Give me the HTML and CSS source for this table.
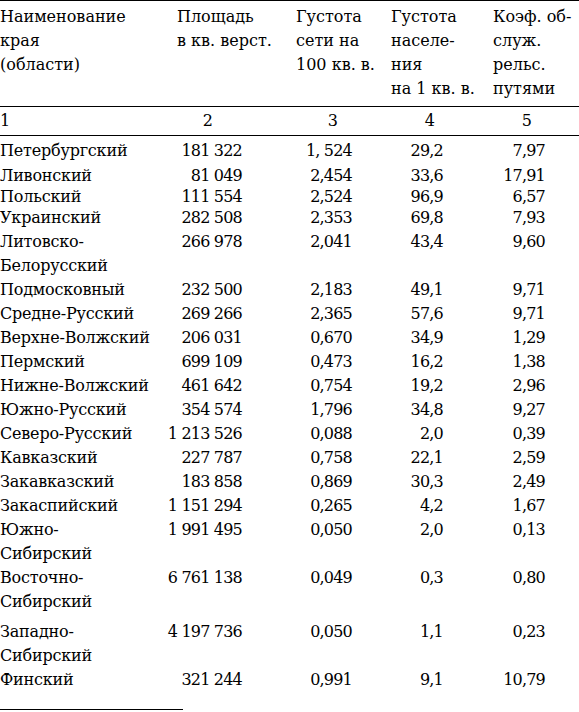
FILE: index.html
```html
<!DOCTYPE html>
<html lang="ru">
<head>
<meta charset="utf-8">
<link rel="stylesheet" href="styles.css">
</head>
<body>
<table class="tbl">
  <colgroup>
    <col class="c1"><col class="c2"><col class="c3"><col class="c4"><col class="c5">
  </colgroup>
  <thead>
    <tr class="head">
      <th>Наименование<br>края<br>(области)</th>
      <th class="h2">Площадь<br>в кв. верст.</th>
      <th>Густота<br>сети на<br>100 кв. в.</th>
      <th>Густота<br>населе-<br>ния<br>на 1 кв. в.</th>
      <th>Коэф. об-<br>служ.<br>рельс.<br>путями</th>
    </tr>
    <tr class="nums">
      <td class="n1">1</td><td class="n2">2</td><td class="n3">3</td><td class="n4">4</td><td class="n5">5</td>
    </tr>
  </thead>
  <tbody>
    <tr class="r first"><td>Петербургский</td><td>181 322</td><td>1, 524</td><td>29,2</td><td>7,97</td></tr>
    <tr class="r r25"><td>Ливонский</td><td>81 049</td><td>2,454</td><td>33,6</td><td>17,91</td></tr>
    <tr class="r r18"><td>Польский</td><td>111 554</td><td>2,524</td><td>96,9</td><td>6,57</td></tr>
    <tr class="r"><td>Украинский</td><td>282 508</td><td>2,353</td><td>69,8</td><td>7,93</td></tr>
    <tr class="r"><td>Литовско-<br>Белорусский</td><td>266 978</td><td>2,041</td><td>43,4</td><td>9,60</td></tr>
    <tr class="r"><td>Подмосковный</td><td>232 500</td><td>2,183</td><td>49,1</td><td>9,71</td></tr>
    <tr class="r"><td>Средне-Русский</td><td>269 266</td><td>2,365</td><td>57,6</td><td>9,71</td></tr>
    <tr class="r"><td>Верхне-Волжский</td><td>206 031</td><td>0,670</td><td>34,9</td><td>1,29</td></tr>
    <tr class="r"><td>Пермский</td><td>699 109</td><td>0,473</td><td>16,2</td><td>1,38</td></tr>
    <tr class="r"><td>Нижне-Волжский</td><td>461 642</td><td>0,754</td><td>19,2</td><td>2,96</td></tr>
    <tr class="r"><td>Южно-Русский</td><td>354 574</td><td>1,796</td><td>34,8</td><td>9,27</td></tr>
    <tr class="r"><td>Северо-Русский</td><td>1 213 526</td><td>0,088</td><td>2,0</td><td>0,39</td></tr>
    <tr class="r"><td>Кавказский</td><td>227 787</td><td>0,758</td><td>22,1</td><td>2,59</td></tr>
    <tr class="r"><td>Закавказский</td><td>183 858</td><td>0,869</td><td>30,3</td><td>2,49</td></tr>
    <tr class="r"><td>Закаспийский</td><td>1 151 294</td><td>0,265</td><td>4,2</td><td>1,67</td></tr>
    <tr class="r"><td>Южно-<br>Сибирский</td><td>1 991 495</td><td>0,050</td><td>2,0</td><td>0,13</td></tr>
    <tr class="r gap"><td>Восточно-<br>Сибирский</td><td>6 761 138</td><td>0,049</td><td>0,3</td><td>0,80</td></tr>
    <tr class="r"><td>Западно-<br>Сибирский</td><td>4 197 736</td><td>0,050</td><td>1,1</td><td>0,23</td></tr>
    <tr class="r"><td>Финский</td><td>321 244</td><td>0,991</td><td>9,1</td><td>10,79</td></tr>
  </tbody>
</table>
<div class="foot"></div>
</body>
</html>
```
FILE: styles.css
```css
html, body {
  margin: 0;
  padding: 0;
  background: #fff;
}
body {
  font-family: "DejaVu Serif", "Liberation Serif", serif;
  font-size: 16px;
  color: #000;
  width: 579px;
  height: 712px;
  overflow: hidden;
}
.tbl {
  width: 579px;
  border-collapse: collapse;
  table-layout: fixed;
  line-height: 24px;
}
.c1 { width: 160px; }
.c2 { width: 136px; }
.c3 { width: 95px; }
.c4 { width: 102px; }
.c5 { width: 86px; }

.head th {
  font-weight: normal;
  text-align: left;
  vertical-align: top;
  padding: 4px 0 5px 0;
  border-top: 1.5px solid #000;
  border-bottom: 1.5px solid #000;
  white-space: nowrap;
}
.head .h2 { padding-left: 17px; }
.nums td {
  padding: 2px 0 2px 0;
  border-bottom: 1.5px solid #000;
  text-align: right;
}
.nums .n1 { text-align: left; }
.nums .n2 { padding-right: 83px; }
.nums .n3 { padding-right: 53px; }
.nums .n4 { padding-right: 58px; }
.nums .n5 { padding-right: 47px; }

.r td {
  padding: 0;
  vertical-align: top;
  text-align: right;
  letter-spacing: -0.8px;
  white-space: nowrap;
}
.r td:first-child { text-align: left; letter-spacing: -0.2px; }
.r td:nth-child(2) { padding-right: 54px; }
.r td:nth-child(3) { padding-right: 39px; }
.r td:nth-child(4) { padding-right: 50px; }
.r td:nth-child(5) { padding-right: 34px; }
.r.first td { padding-top: 3px; }
.r.r25 td { line-height: 25px; }
.r.r18 td { line-height: 18px; }
.r.gap td { padding-bottom: 6px; }

.foot {
  width: 183px;
  border-top: 1px solid #000;
  margin-top: 17px;
}
```
